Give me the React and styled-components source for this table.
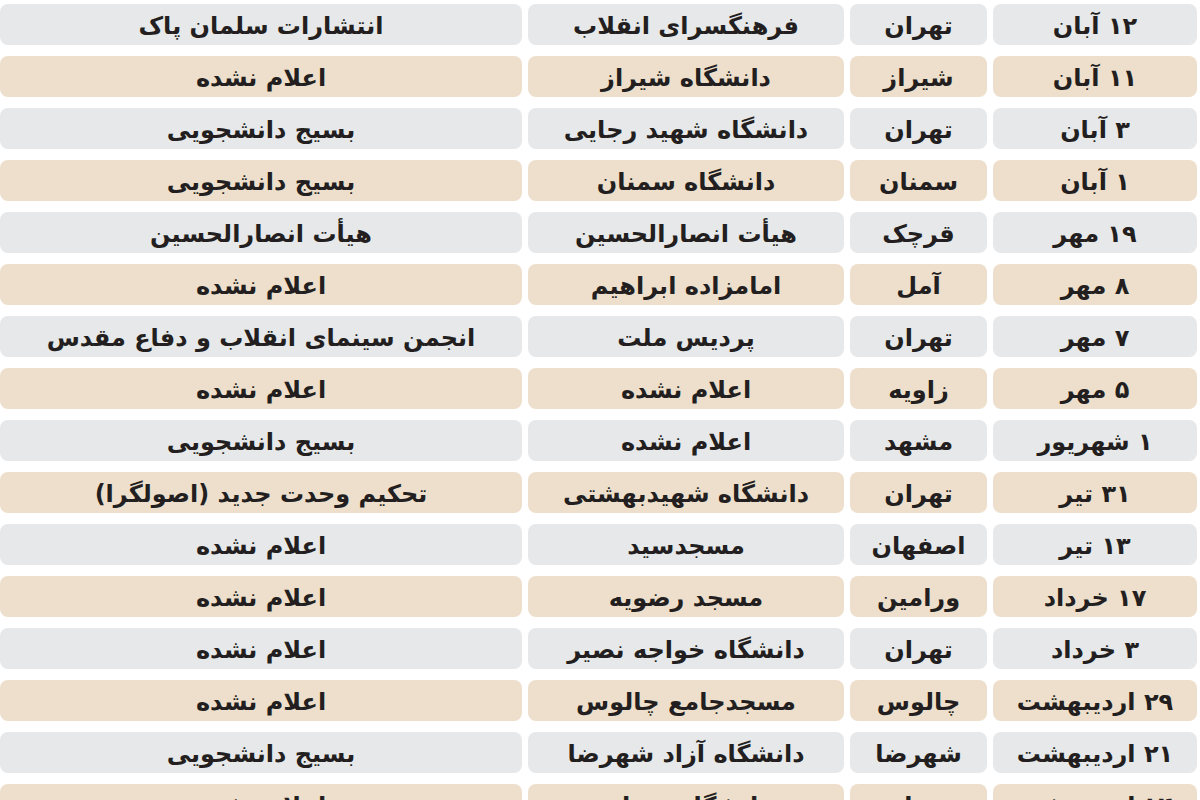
import styled, { createGlobalStyle } from "styled-components";

const GlobalStyle = createGlobalStyle`
  html, body {
    margin: 0;
    padding: 0;
    background: #ffffff;
    overflow: hidden;
  }
`;

const ROWS = [
  ["۱۲ آبان", "تهران", "فرهنگسرای انقلاب", "انتشارات سلمان پاک"],
  ["۱۱ آبان", "شیراز", "دانشگاه شیراز", "اعلام نشده"],
  ["۳ آبان", "تهران", "دانشگاه شهید رجایی", "بسیج دانشجویی"],
  ["۱ آبان", "سمنان", "دانشگاه سمنان", "بسیج دانشجویی"],
  ["۱۹ مهر", "قرچک", "هیأت انصارالحسین", "هیأت انصارالحسین"],
  ["۸ مهر", "آمل", "امامزاده ابراهیم", "اعلام نشده"],
  ["۷ مهر", "تهران", "پردیس ملت", "انجمن سینمای انقلاب و دفاع مقدس"],
  ["۵ مهر", "زاویه", "اعلام نشده", "اعلام نشده"],
  ["۱ شهریور", "مشهد", "اعلام نشده", "بسیج دانشجویی"],
  ["۳۱ تیر", "تهران", "دانشگاه شهیدبهشتی", "تحکیم وحدت جدید (اصولگرا)"],
  ["۱۳ تیر", "اصفهان", "مسجدسید", "اعلام نشده"],
  ["۱۷ خرداد", "ورامین", "مسجد رضویه", "اعلام نشده"],
  ["۳ خرداد", "تهران", "دانشگاه خواجه نصیر", "اعلام نشده"],
  ["۲۹ اردیبهشت", "چالوس", "مسجدجامع چالوس", "اعلام نشده"],
  ["۲۱ اردیبهشت", "شهرضا", "دانشگاه آزاد شهرضا", "بسیج دانشجویی"],
  ["۱۴ اردیبهشت", "زنجان", "دانشگاه زنجان", "اعلام نشده"],
];

const App = () => {
  return (
    <>
      <GlobalStyle />
      <Table dir="rtl">
        {ROWS.map((row, i) => (
          <Row key={i}>
            {row.map((text, j) => (
              <Cell key={j} $tone={i % 2 === 0 ? "gray" : "beige"}>
                {text}
              </Cell>
            ))}
          </Row>
        ))}
      </Table>
    </>
  );
};
export default App;

const Table = styled.div`
  display: flex;
  flex-direction: column;
  gap: 11px;
  padding: 4px 3px 0 0;
  height: 800px;
  box-sizing: border-box;
  font-family: "DejaVu Sans", "Noto Sans", sans-serif;
`;

const Row = styled.div`
  display: grid;
  grid-template-columns: 204px 137px 316px 1fr;
  column-gap: 6px;
  height: 41px;
  flex-shrink: 0;
`;

const Cell = styled.div`
  display: flex;
  align-items: center;
  justify-content: center;
  padding-top: 2px;
  box-sizing: border-box;
  border-radius: 8px;
  background: ${(p) => (p.$tone === "gray" ? "#e7e8ea" : "#eedfcd")};
  color: #231f20;
  font-size: 24px;
  font-weight: bold;
  white-space: nowrap;
  overflow: hidden;
`;
